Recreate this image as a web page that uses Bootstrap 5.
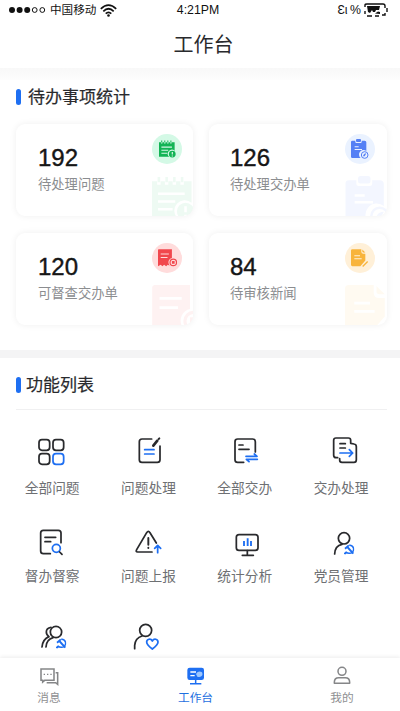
<!DOCTYPE html>
<html lang="zh-CN">
<head>
<meta charset="utf-8">
<meta name="viewport" content="width=device-width, initial-scale=1">
<title>工作台</title>
<link href="https://cdn.jsdelivr.net/npm/bootstrap@5.3.0/dist/css/bootstrap.min.css" rel="stylesheet">
<style>
body{font-family:"Liberation Sans","Noto Sans CJK SC",sans-serif;color:#292a2d;background:#fff}
.screen{height:711px}
svg{overflow:visible;display:block}
.status{height:20px;font-size:12.3px;line-height:20px;color:#111;padding:0 13px 0 9px}
.status .carrier{font-size:11.6px}
.status .side{width:155px}
.topbar{height:48px;font-size:20px;line-height:50px;padding-left:7px}
.strip{height:12px;background:linear-gradient(#f8f8f8,#fdfdfd)}
.sec{font-size:17px;line-height:24px;-webkit-text-stroke:.2px #292a2d}
.sec::before{content:"";width:5px;height:16px;border-radius:2.5px;background:#1e6ff2;margin-top:-3px}
.stats{height:270px;padding:6px 13px 0 16px}
.stats .sec{gap:7px;height:24px}
.tiles{display:grid;grid-template-columns:177px 178px;gap:17px 16px;margin-top:14px}
.tile{height:92px;border-radius:9px;background:#fff;box-shadow:0 0 7px rgba(0,0,0,.065);padding:19px 0 0 22px}
.tile:nth-child(even){padding-left:21px}
.num{font-size:24px;line-height:30px;color:#161616;-webkit-text-stroke:.4px #161616}
.lbl{font-size:13.3px;line-height:20px;color:#8b8d90;margin-top:2px}
.disc{top:10px;right:11px;width:30px;height:30px}
.tile:nth-child(even) .disc{right:12px}
.ghost{left:136px;top:52px;opacity:.07}
.green{color:#12b455}.blue{color:#5580f5}.red{color:#f1474d}.amber{color:#f8b43c}
.green .disc{background:#d4f9e6}.blue .disc{background:#eaf2ff}.red .disc{background:#ffdcdc}.amber .disc{background:#fff0d8}
.band{height:8px;background:#f4f4f5}
.funcs{padding:16px 0 0 0}
.funcs .sec{gap:5px;padding-left:16px;height:24px}
.rule{height:1px;background:#f0f0f1;margin:11px 13px 26px 16px}
.grid4{display:grid;grid-template-columns:repeat(4,96.3px);grid-auto-rows:88px;padding-left:4px}
.grid4 span{font-size:13.7px;line-height:20px;margin-top:13px;color:#6e7073}
.ico{width:30px;height:30px;fill:none;stroke:#292a2d;stroke-width:5.2;stroke-linecap:round;stroke-linejoin:round}
.ico .b{stroke:#1e6ff2}
.tabs{height:53px;background:#fff;box-shadow:0 -1px 4px rgba(0,0,0,.08);padding-right:9px}
.tab-i{width:98px;font-size:11.7px;line-height:16px;color:#8f9092;padding-top:7px}
.tab-i svg{width:20px;height:20px;margin-bottom:5px}
.tab-i.on{color:#1e6fdf}
</style>
<script src="https://cdn.jsdelivr.net/npm/bootstrap@5.3.0/dist/js/bootstrap.bundle.min.js"></script>
</head>
<body>
<svg width="0" height="0" class="position-absolute">
<defs>
<symbol id="pad" viewBox="0 0 50 52"><path fill="currentColor" fill-rule="evenodd" d="M0 6H6V10H10V6H15V10H19V6H24V10H28V6H33V10H37V6H46V31A11 11 0 0 0 30 49H0ZM7 19V22H38V19ZM7 28V31H27V28ZM7 37V40H24V37Z"/><path d="M8 1V7M17 1V7M26 1V7M35 1V7" stroke="currentColor" stroke-width="3"/><circle cx="39" cy="41" r="10" fill="currentColor"/><path d="M39 35V42M39 45V48" stroke="#fff" stroke-width="3"/></symbol>
<symbol id="clip" viewBox="0 0 54 60"><path fill="currentColor" fill-rule="evenodd" d="M4 5H13V9Q13 12 16 12H29Q32 12 32 9V5H41Q46 5 46 10V36A13 13 0 0 0 29 57H4Q0 57 0 53V9Q0 5 4 5ZM11 22V25H23V22ZM11 30V33H33V30Z"/><rect x="15" y="0" width="15" height="9" rx="3" fill="currentColor"/><circle cx="41" cy="48" r="10" fill="none" stroke="currentColor" stroke-width="3"/><path d="M36 52Q38 43 46 43L41 52Z" fill="currentColor"/></symbol>
<symbol id="bill" viewBox="0 0 56 52"><path fill="currentColor" fill-rule="evenodd" d="M2 0H41V26A13 13 0 0 0 32 44L34 49L29 46L24 50L18 46L13 50L8 46L0 50V2ZM8 13V16H32V13ZM8 23V26H28V23Z"/><circle cx="45" cy="39" r="9.5" fill="none" stroke="currentColor" stroke-width="3.5"/><path d="M41 35H49V43H41Z" fill="currentColor"/></symbol>
<symbol id="news" viewBox="0 0 54 56"><path fill="currentColor" fill-rule="evenodd" d="M4 0H31V8Q31 14 37 14H43V34L28 51H4Q0 51 0 47V4Q0 0 4 0ZM10 18V21H27V18ZM10 27V30H32V27Z"/><path d="M34 1L43 10H37Q34 10 34 7Z" fill="currentColor"/><path d="M35 52L50 37" stroke="currentColor" stroke-width="4"/></symbol>
<symbol id="emblem" viewBox="0 0 30 30"><g fill="none" stroke="#1e6ff2" stroke-linecap="butt"><path d="M15 2C28 3 31 15 25 22C19 28 10 27 6 22" stroke-width="4.4"/><path d="M9 7L27 27M3 13L14 3" stroke-width="5.5"/><path d="M8 22L1 28" stroke-width="6"/></g></symbol>
</defs>
</svg>
<div class="screen position-relative overflow-hidden d-flex flex-column">
<div class="status d-flex justify-content-between align-items-center flex-shrink-0">
  <div class="side d-flex align-items-center">
    <svg width="37" height="8"><g fill="#111"><circle cx="3" cy="4" r="3"/><circle cx="10.6" cy="4" r="3"/><circle cx="18.2" cy="4" r="3"/></g><g fill="none" stroke="#111" stroke-width="1"><circle cx="25.7" cy="4" r="2.4"/><circle cx="33.3" cy="4" r="2.4"/></g></svg>
    <span class="carrier ms-1">中国移动</span>
    <svg class="ms-1" width="17" height="13" viewBox="0 0 17 13"><g fill="none" stroke="#111" stroke-width="1.7"><path d="M.8 4.8Q8.5-2.4 16.2 4.8M3.3 7.3Q8.5 2.2 13.7 7.3M5.7 9.7Q8.5 7 11.3 9.7"/></g><circle cx="8.5" cy="11.5" r="1.3" fill="#111"/></svg>
  </div>
  <div class="text-nowrap">4:21PM</div>
  <div class="side d-flex align-items-center justify-content-end"><span>Ɛι&thinsp;%</span>
    <svg class="ms-1" width="22" height="14" viewBox="1 0 22 14"><path d="M1 4V2Q1 1 3 1H19Q21 1 21 3V5M23 5V9M21 10V12H18M15 13H11M8 13H3M1 11V8" fill="none" stroke="#111" stroke-width="1.4"/><path d="M3 3H16L15 7H12L11 9H9L8 7L6 10L4 9Z" fill="#111"/><path d="M11 10.5L14 8.5L16 9V11Z" fill="#111"/></svg>
  </div>
</div>
<div class="topbar text-center flex-shrink-0">工作台</div>
<div class="strip flex-shrink-0"></div>
<section class="stats flex-shrink-0">
  <div class="sec d-flex align-items-center">待办事项统计</div>
  <div class="tiles">
    <div class="tile green position-relative overflow-hidden"><div class="num">192</div><div class="lbl">待处理问题</div><div class="disc rounded-circle position-absolute d-flex align-items-center justify-content-center"><svg width="17" height="18"><use href="#pad"/></svg></div><svg class="ghost position-absolute" width="43" height="45"><use href="#pad"/></svg></div>
    <div class="tile blue position-relative overflow-hidden"><div class="num">126</div><div class="lbl">待处理交办单</div><div class="disc rounded-circle position-absolute d-flex align-items-center justify-content-center"><svg width="18" height="20"><use href="#clip"/></svg></div><svg class="ghost position-absolute" width="46" height="50"><use href="#clip"/></svg></div>
    <div class="tile red position-relative overflow-hidden"><div class="num">120</div><div class="lbl">可督查交办单</div><div class="disc rounded-circle position-absolute d-flex align-items-center justify-content-center"><svg width="19" height="18"><use href="#bill"/></svg></div><svg class="ghost position-absolute" width="52" height="48"><use href="#bill"/></svg></div>
    <div class="tile amber position-relative overflow-hidden"><div class="num">84</div><div class="lbl">待审核新闻</div><div class="disc rounded-circle position-absolute d-flex align-items-center justify-content-center"><svg width="18" height="19"><use href="#news"/></svg></div><svg class="ghost position-absolute" width="50" height="52"><use href="#news"/></svg></div>
  </div>
</section>
<div class="band flex-shrink-0"></div>
<section class="funcs">
  <div class="sec d-flex align-items-center">功能列表</div>
  <div class="rule"></div>
  <div class="grid4">
    <div class="d-flex flex-column align-items-center"><svg class="ico" viewBox="0 0 90 90"><rect x="6" y="11" width="32" height="32" rx="9"/><rect x="48" y="11" width="32" height="32" rx="9"/><rect x="6" y="53" width="32" height="32" rx="9"/><rect class="b" x="48" y="53" width="32" height="32" rx="9"/></svg><span>全部问题</span></div>
    <div class="d-flex flex-column align-items-center"><svg class="ico" viewBox="0 0 90 90"><path d="M56 9H27Q19 9 19 17V71Q19 79 27 79H73Q81 79 81 71V30"/><path d="M35 41H63M35 54H63" class="b"/><path d="M61 29L73 14" stroke-width="8"/><path d="M77 9L79 7" stroke-width="6"/></svg><span>问题处理</span></div>
    <div class="d-flex flex-column align-items-center"><svg class="ico" viewBox="0 0 90 90"><path d="M41 79H23Q15 79 15 71V17Q15 9 23 9H68Q76 9 76 17V48M27 27H39M27 40H57"/><path class="b" d="M48 61H81L73 54M82 70H49L57 77"/></svg><span>全部交办</span></div>
    <div class="d-flex flex-column align-items-center"><svg class="ico" viewBox="0 0 90 90"><path d="M35 65H30Q23 65 23 58V13Q23 6 30 6H67Q74 6 74 13V22L84 24Q91 25 91 32V71Q91 79 84 79H48Q41 79 41 72V68M42 23H58M42 36H58"/><path class="b" d="M42 51H80M70 41L80 51L70 61"/></svg><span>交办处理</span></div>
    <div class="d-flex flex-column align-items-center"><svg class="ico" viewBox="0 0 90 90"><path d="M40 89H19Q11 89 11 81V27Q11 19 19 19H64Q72 19 72 27V56M24 40H56M24 53H41"/><circle class="b" cx="58" cy="73" r="12"/><path d="M68 84L75 91"/></svg><span>督办督察</span></div>
    <div class="d-flex flex-column align-items-center"><svg class="ico" viewBox="0 0 90 90"><path d="M57 84H14Q7 84 11 77L41 26Q46 18 51 26L70 57"/><path d="M46 42V62M46 71V72" stroke-width="5.8"/><path class="b" d="M74 86V65M65 73L74 64L83 73"/></svg><span>问题上报</span></div>
    <div class="d-flex flex-column align-items-center"><svg class="ico" viewBox="0 0 90 90"><rect x="19" y="32" width="65" height="47" rx="8"/><path d="M52 80V94M37 94H70"/><path class="b" stroke-width="5.6" stroke-linecap="butt" d="M42 51V66M53 43V66M63 51V66"/></svg><span>统计分析</span></div>
    <div class="d-flex flex-column align-items-center"><svg class="ico" viewBox="0 0 90 90"><circle cx="54" cy="43" r="17"/><path d="M26 90Q27 65 48 61"/><use href="#emblem" x="54" y="61" width="31" height="31"/></svg><span>党员管理</span></div>
    <div class="d-flex flex-column align-items-center"><svg class="ico" viewBox="0 0 90 90"><circle cx="57" cy="60" r="17"/><path d="M42 46Q28 48 28 60Q28 69 36 74Q17 82 15 105M27 105Q28 83 48 77"/><use href="#emblem" x="57" y="79" width="31" height="31"/></svg><span>&nbsp;</span></div>
    <div class="d-flex flex-column align-items-center"><svg class="ico" viewBox="0 0 90 90"><circle cx="38" cy="55" r="18"/><path d="M5 110V100Q7 78 27 72"/><path class="b" d="M58 111C47 103 41 98 41 90C41 81 53 78 58 87C63 78 75 81 75 90C75 98 69 103 58 111Z"/></svg><span>&nbsp;</span></div>
  </div>
</section>
<nav class="tabs position-absolute bottom-0 start-0 w-100 d-flex justify-content-between">
  <div class="tab-i d-flex flex-column align-items-center"><svg viewBox="0 0 60 60" fill="none" stroke="#858688" stroke-width="4.6"><path d="M6 12H45V46H17L11 51V46H6Z"/><path d="M50 23H56V58L50 53H23" /><path d="M14 28H18M24 28H28M34 28H38" stroke-width="4"/></svg><span>消息</span></div>
  <div class="tab-i on d-flex flex-column align-items-center"><svg viewBox="0 0 60 60"><rect x="4" y="8" width="50" height="37" rx="7" fill="#1e6ff2"/><path d="M13 21H30M13 32H26" stroke="#fff" stroke-width="4"/><path d="M30 27Q35 18 44 20Q51 21 49 31Q44 39 34 35Z" fill="#9dc7ff"/><path d="M29 44V56M12 56H46" stroke="#1e6ff2" stroke-width="4.5"/></svg><span>工作台</span></div>
  <div class="tab-i d-flex flex-column align-items-center"><svg viewBox="0 0 60 60" fill="none" stroke="#858688" stroke-width="4.6"><circle cx="30" cy="19" r="12"/><path d="M7 55V52Q7 38 20 38H40Q53 38 53 52V55Z" stroke-linejoin="round"/></svg><span>我的</span></div>
</nav>
</div>
</body>
</html>
